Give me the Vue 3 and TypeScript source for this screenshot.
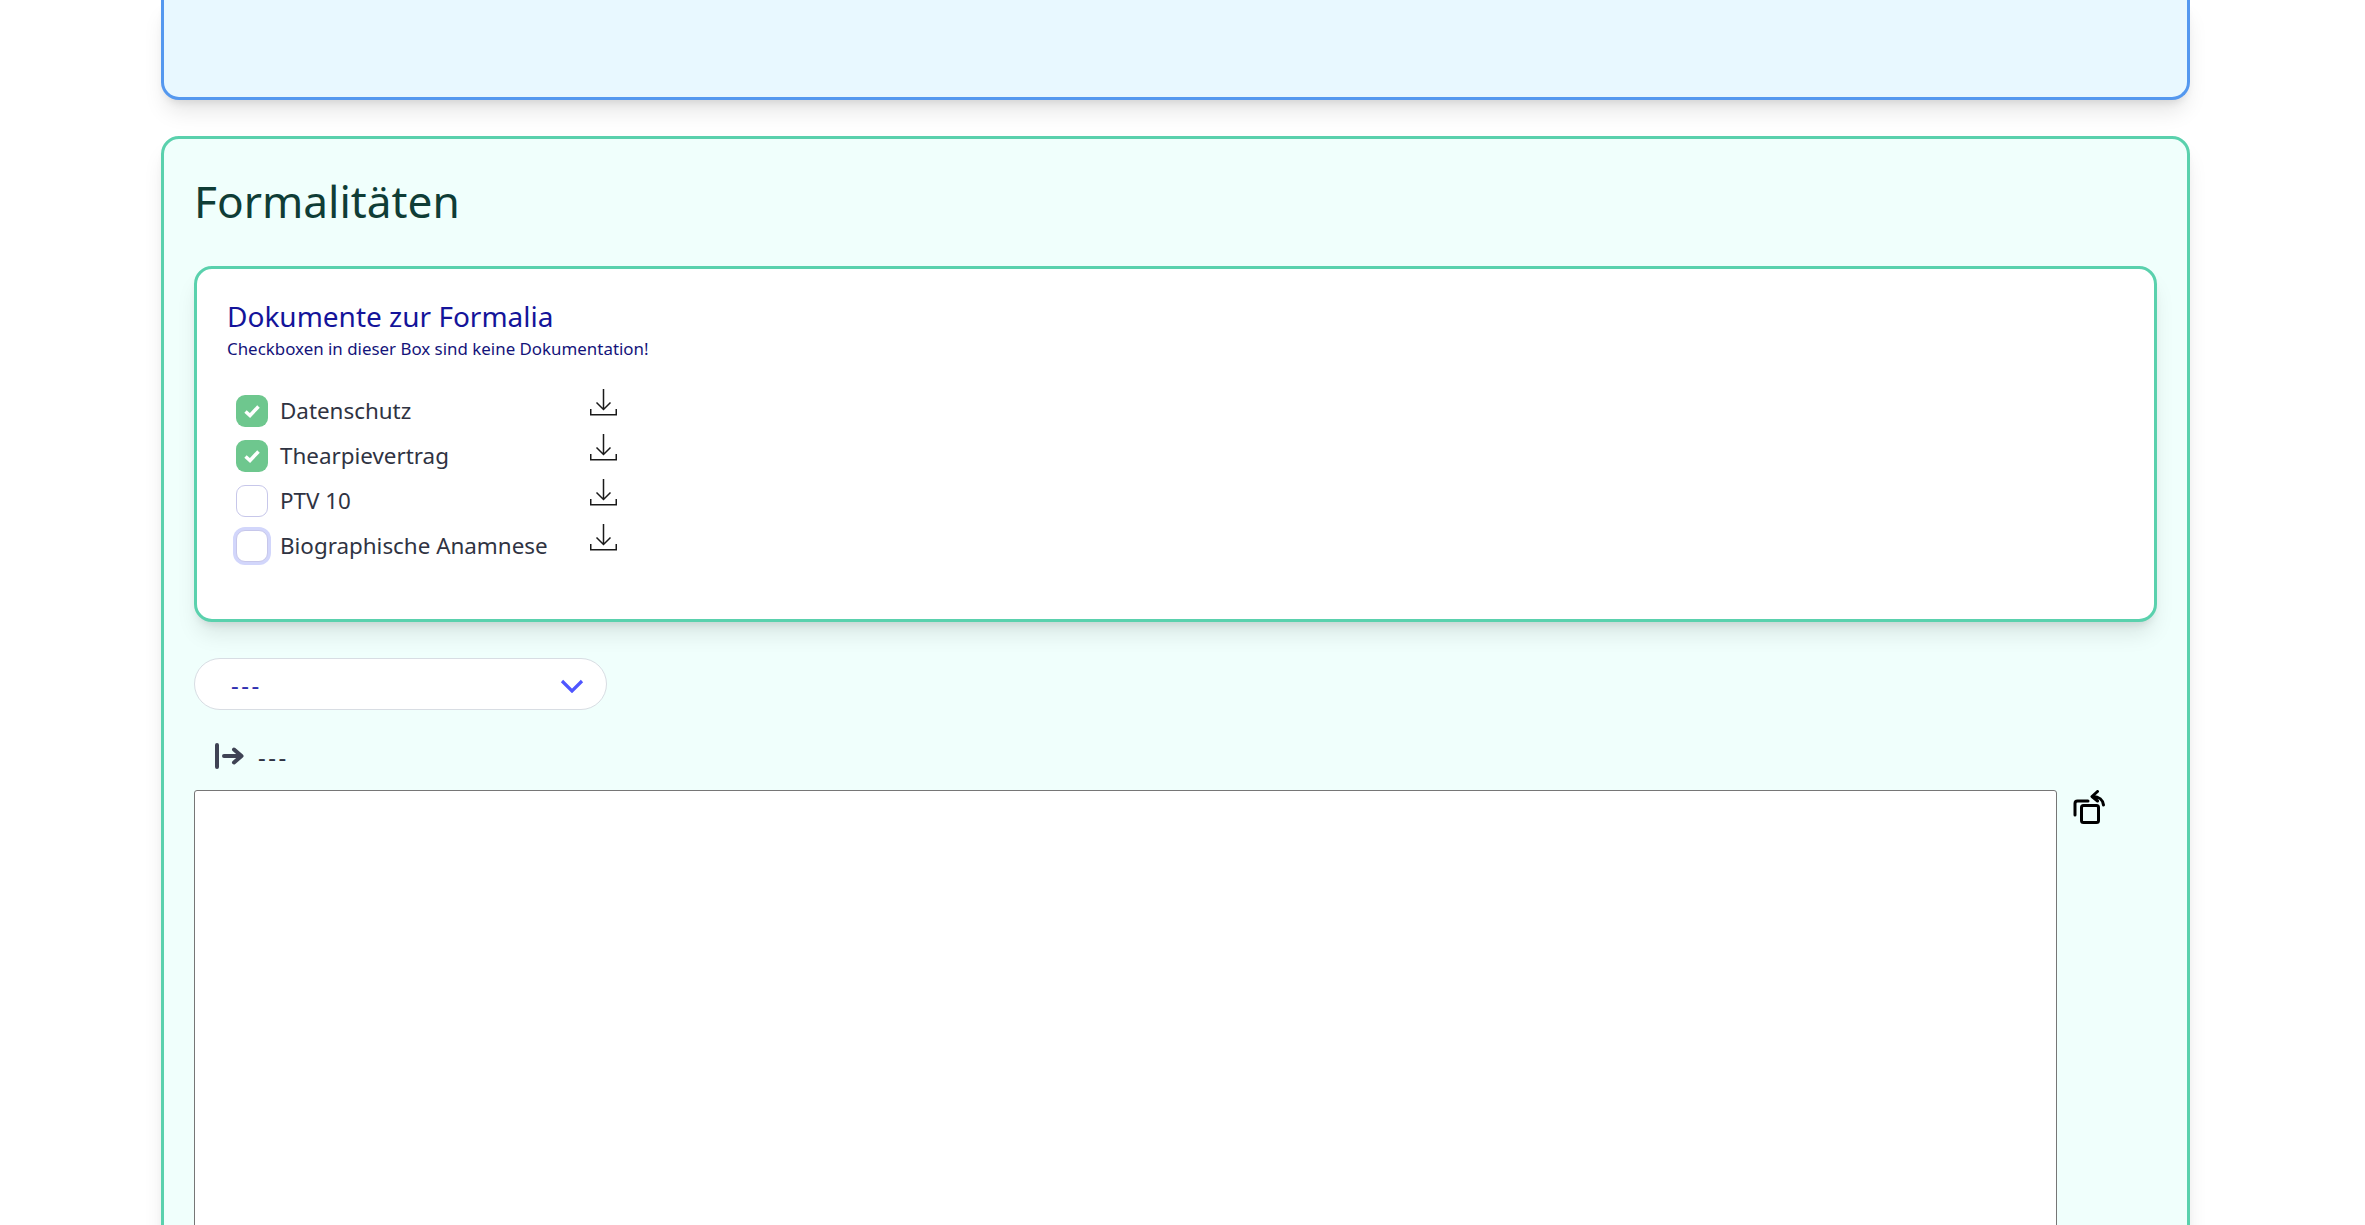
<script setup lang="ts">
interface Doc { name: string; state: 'checked' | 'empty' | 'focus' }
const docs: Doc[] = [
  { name: 'Datenschutz', state: 'checked' },
  { name: 'Thearpievertrag', state: 'checked' },
  { name: 'PTV 10', state: 'empty' },
  { name: 'Biographische Anamnese', state: 'focus' },
]
</script>

<template>
  <div class="page">
    <section class="blue"></section>
    <section class="green">
      <h1 class="title">Formalitäten</h1>
      <div class="card">
        <h2 class="card-title">Dokumente zur Formalia</h2>
        <p class="card-sub">Checkboxen in dieser Box sind keine Dokumentation!</p>
        <div class="docs">
          <div v-for="d in docs" :key="d.name" class="doc">
            <div class="doc-label">
              <span class="box" :class="d.state">
                <svg v-if="d.state === 'checked'" width="16" height="14" viewBox="0 0 16 14">
                  <path d="M1.500 7.500 L6 11.500 L14.500 2.500" fill="none" stroke="#fff" stroke-width="3.500" />
                </svg>
              </span>
              <span class="doc-name">{{ d.name }}</span>
            </div>
            <svg class="dl" width="27" height="27" viewBox="0 0 27 27">
              <path d="M13.5 0 V20.5 M6.5 13.5 L13.5 20.5 L20.5 13.5 M.75 20 V25.75 H26.25 V20" fill="none" stroke="#1a1a1a" stroke-width="1.5" />
            </svg>
          </div>
        </div>
      </div>
      <div class="select-wrap">
        <select class="select"><option>---</option></select>
        <svg class="chev" width="24" height="14" viewBox="0 0 24 14">
          <path d="M2 2 L12 12 L22 2" fill="none" stroke="#4f56ff" stroke-width="3.2" />
        </svg>
      </div>
      <div class="current">
        <svg width="32" height="28" viewBox="0 0 32 28">
          <path d="M3 3 V25 M10 14 H27 M20 7.500 L27.500 14 L20 20.500" fill="none" stroke="#3f4354" stroke-width="4" stroke-linecap="round" stroke-linejoin="round" />
        </svg>
        <span class="current-text">---</span>
      </div>
      <div class="editor">
        <textarea class="area"></textarea>
        <svg class="copy" width="36" height="38" viewBox="0 0 36 38">
          <rect x="10.500" y="15.500" width="17" height="17" rx="2" fill="none" stroke="#000" stroke-width="3" />
          <path d="M4 25 V13.500 Q4 11 6.500 11 H17" fill="none" stroke="#000" stroke-width="3" stroke-linecap="round" />
          <path d="M32.500 15 C32 10 28 6.500 22 6.500 M26.500 1.500 L21 6.500 L26.500 11" fill="none" stroke="#000" stroke-width="3" stroke-linecap="round" stroke-linejoin="round" />
        </svg>
      </div>
    </section>
  </div>
</template>

<style>
html, body { overflow: hidden; background: #fff; }
</style>

<style scoped>
.page {
  width: 2029px;
  height: 1225px;
  margin-left: 161px;
  display: flex;
  flex-direction: column;
  gap: 36px;
  font-family: "Noto Sans", "Open Sans", sans-serif;
  color: #2f3342;
}
.blue {
  flex: none;
  height: 100px;
  box-sizing: border-box;
  background: #e8f8ff;
  border: 3px solid #5498ef;
  border-top: 0;
  border-radius: 0 0 18px 18px;
  box-shadow: 0 15px 22px -4px rgba(0, 0, 0, .1), 0 6px 9px -4px rgba(0, 0, 0, .1);
}
.green {
  flex: none;
  box-sizing: border-box;
  height: 1400px;
  padding: 30px;
  background: #f0fffc;
  border: 3px solid #5ad1ad;
  border-radius: 18px;
  box-shadow: 0 15px 22px -4px rgba(0, 0, 0, .1), 0 6px 9px -4px rgba(0, 0, 0, .1);
}
.title {
  margin: 0 0 33px;
  font-size: 44.2px;
  line-height: 64px;
  font-weight: 400;
  color: #0f3d36;
}
.card {
  box-sizing: border-box;
  height: 356px;
  padding: 27px 30px 0;
  background: #fff;
  border: 3px solid #5ad1ad;
  border-radius: 18px;
  box-shadow: 0 15px 22px -4px rgba(0, 0, 0, .1), 0 6px 9px -4px rgba(0, 0, 0, .1);
}
.card-title {
  margin: 0;
  font-size: 28px;
  line-height: 40px;
  font-weight: 400;
  color: #14149a;
}
.card-sub {
  margin: 1px 0 27px;
  font-size: 16.9px;
  line-height: 24px;
  color: #14147a;
}
.docs { display: flex; flex-direction: column; margin-left: 9px; }
.doc {
  display: grid;
  grid-template-columns: 354px 27px;
  height: 45px;
}
.doc-label { display: flex; align-items: center; gap: 12px; }
.box {
  flex: none;
  width: 32px;
  height: 32px;
  box-sizing: border-box;
  border-radius: 9px;
  display: flex;
  align-items: center;
  justify-content: center;
}
.box.checked { background: #6ec78e; }
.box.empty { border: 1.5px solid #c7c7ea; background: #fff; }
.box.focus { border: 1.500px solid #c7c7ea; background: #fff; box-shadow: 0 0 0 3px #d2d6fb; }
.doc-name { font-size: 22.4px; line-height: 36px; color: #2f3342; }
.dl { margin-top: 1px; }
.select-wrap { position: relative; width: 413px; margin-top: 36px; }
.select {
  display: block;
  width: 100%;
  height: 52px;
  box-sizing: border-box;
  padding: 0 36px;
  appearance: none;
  background: #fff;
  border: 1.500px solid #d8dde3;
  border-radius: 26px;
  font-family: inherit;
  font-size: 24px;
  letter-spacing: 2.5px;
  color: #3030b0;
  outline: none;
}
.chev { position: absolute; right: 23px; top: 21px; pointer-events: none; }
.current {
  display: flex;
  align-items: center;
  gap: 12px;
  height: 40px;
  margin: 26px 0 14px 20px;
}
.current-text { font-size: 24px; letter-spacing: 2.5px; color: #2f3342; }
.editor { display: flex; align-items: flex-start; gap: 14px; }
.area {
  display: block;
  flex: none;
  width: 1863px;
  height: 600px;
  box-sizing: border-box;
  background: #fff;
  border: 1.500px solid #767676;
  border-radius: 3px;
  outline: none;
  resize: none;
}
.copy { margin-top: 0; }
</style>
